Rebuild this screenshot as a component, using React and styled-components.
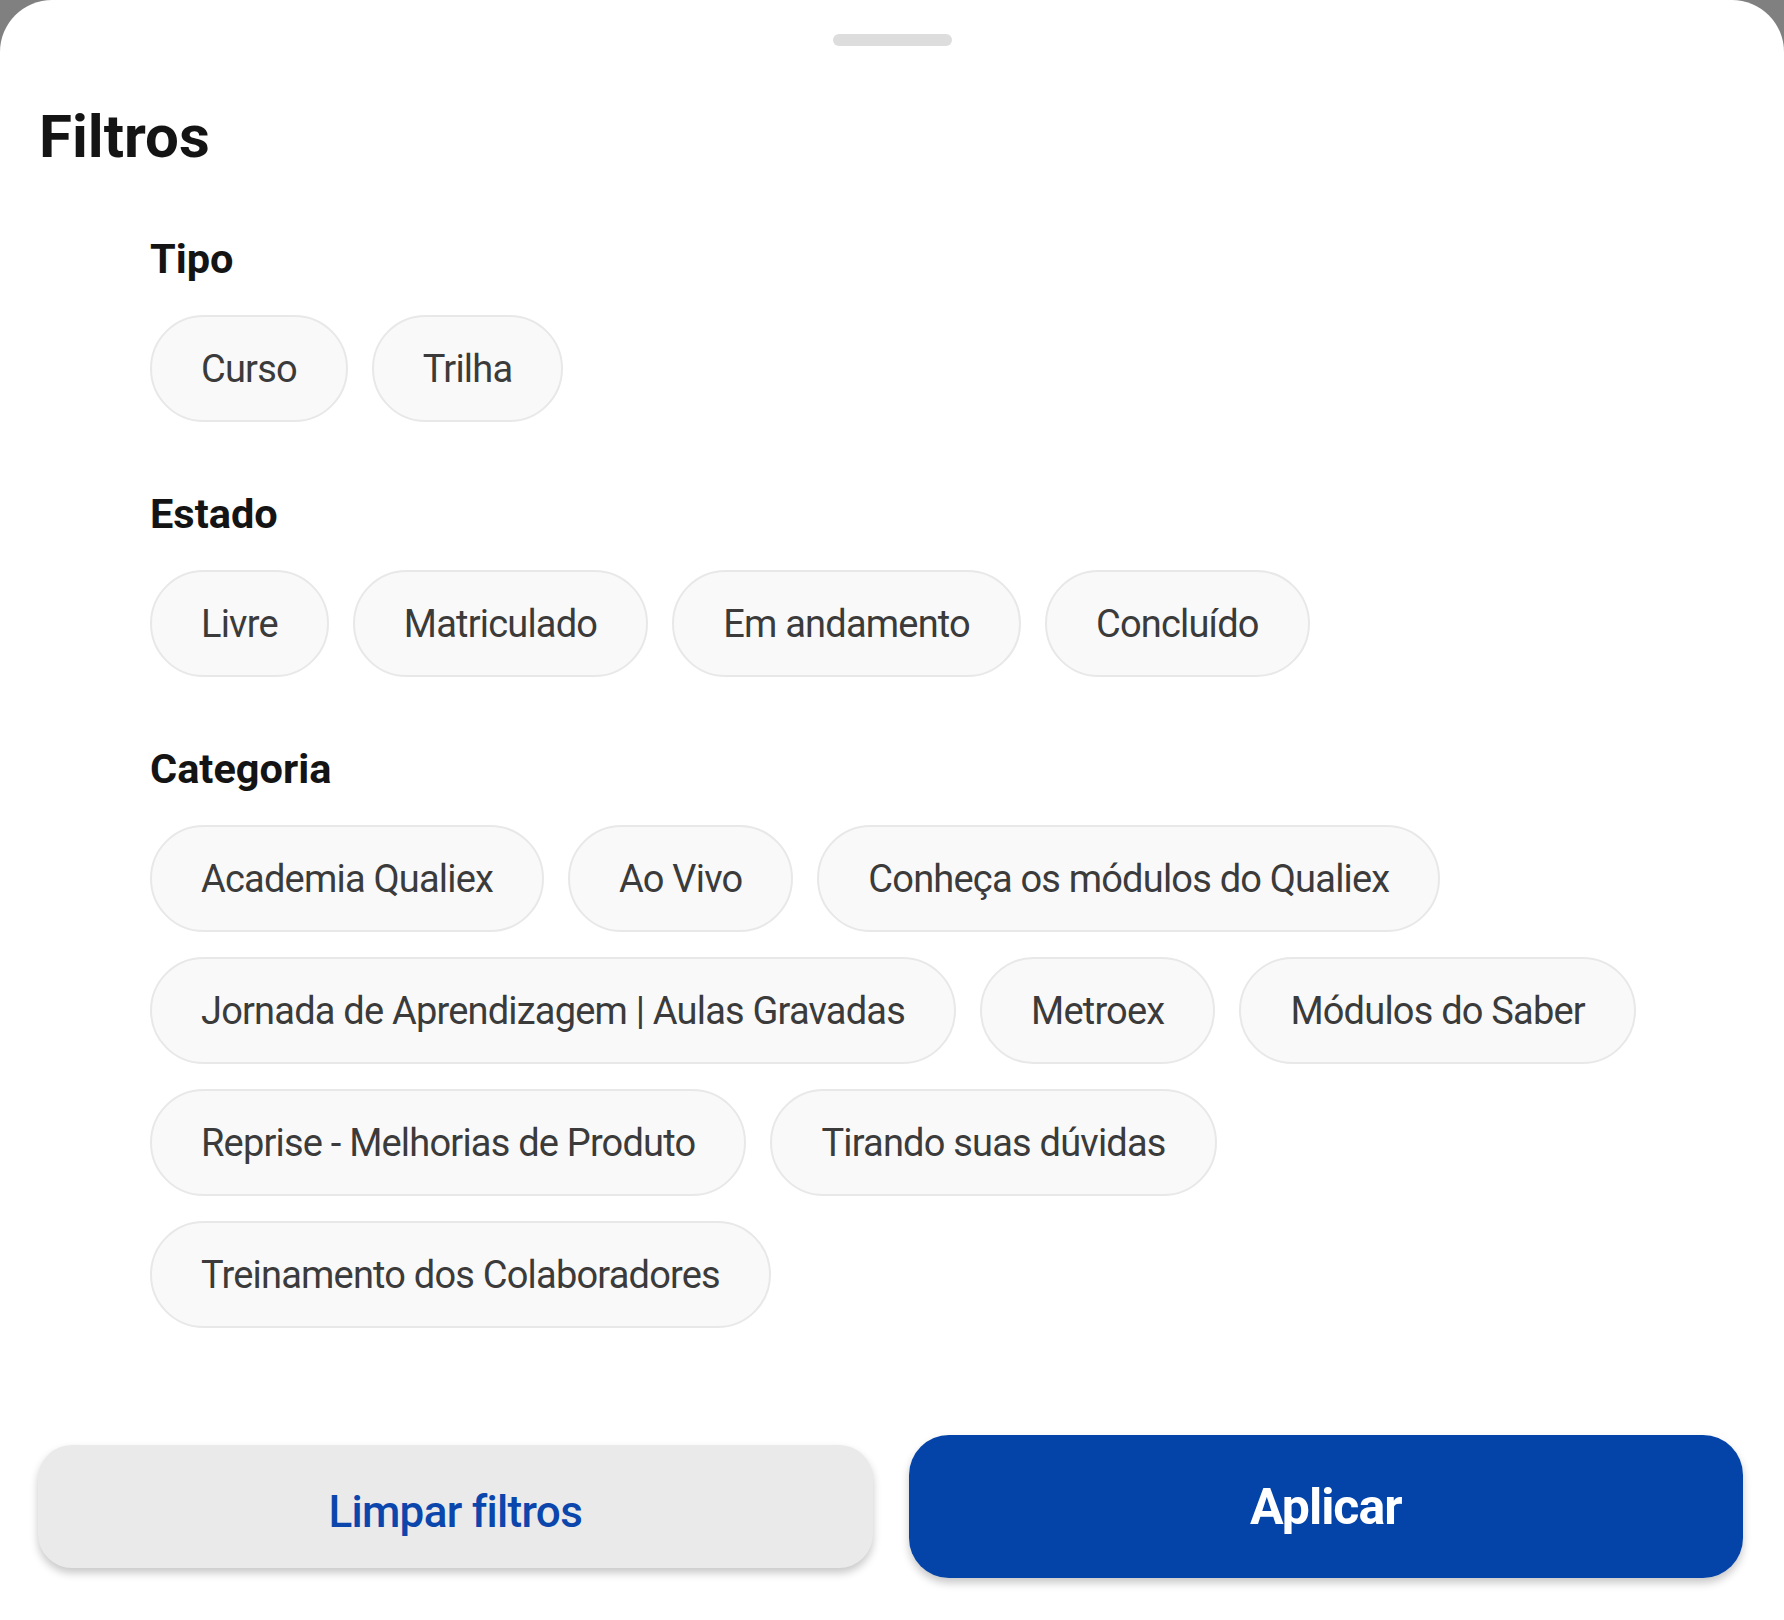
import React from 'react';
import styled, { createGlobalStyle } from 'styled-components';

const GlobalStyle = createGlobalStyle`
  html, body {
    margin: 0;
    padding: 0;
    background: #808080;
  }
  body {
    font-family: Roboto, "Noto Sans", "Liberation Sans", sans-serif;
    -webkit-font-smoothing: antialiased;
  }
  * { box-sizing: border-box; }
`;

const Sheet = styled.div`
  width: 1784px;
  height: 1620px;
  background: #ffffff;
  border-radius: 52px 52px 0 0;
  display: flex;
  flex-direction: column;
  overflow: hidden;
`;

const Handle = styled.div`
  align-self: center;
  width: 119px;
  height: 12px;
  margin-top: 34px;
  border-radius: 6px;
  background: #dddddd;
`;

const Title = styled.h1`
  margin: 61px 0 0;
  padding-left: 39px;
  font-size: 60px;
  line-height: 60px;
  font-weight: 700;
  color: #141414;
`;

const Sections = styled.div`
  display: flex;
  flex-direction: column;
  gap: 71px;
  margin-top: 71px;
  padding: 0 41px 0 150px;
`;

const Section = styled.section`
  display: flex;
  flex-direction: column;
  gap: 36px;
`;

const SectionTitle = styled.h2`
  margin: 0;
  font-size: 41.5px;
  line-height: 41px;
  font-weight: 700;
  color: #141414;
`;

const ChipList = styled.div`
  display: flex;
  flex-wrap: wrap;
  column-gap: 24px;
  row-gap: 25px;
`;

const Chip = styled.button`
  height: 107px;
  padding: 0 49px;
  border: 2px solid #e8e8e8;
  border-radius: 54px;
  background: ${p => (p.$active ? '#e3ebf8' : '#f9f9f9')};
  color: #3b3b3b;
  font-family: inherit;
  font-size: 38px;
  font-weight: 400;
  letter-spacing: -0.8px;
  white-space: nowrap;
  cursor: pointer;
`;

const Footer = styled.div`
  display: grid;
  grid-template-columns: 1fr 1fr;
  column-gap: 36px;
  align-items: center;
  margin-top: 107px;
  padding: 0 41px 0 38px;
`;

const ActionButton = styled.button`
  height: ${p => (p.$primary ? '143px' : '123px')};
  padding: ${p => (p.$primary ? '0' : '11px 0 0')};
  border: none;
  border-radius: ${p => (p.$primary ? '40px' : '34px')};
  background: ${p => (p.$primary ? '#0444a9' : '#eaeaea')};
  color: ${p => (p.$primary ? '#ffffff' : '#0b46ad')};
  font-family: inherit;
  font-size: ${p => (p.$primary ? '50px' : '44px')};
  font-weight: ${p => (p.$primary ? 700 : 500)};
  letter-spacing: ${p => (p.$primary ? '-1px' : '-0.7px')};
  box-shadow: 0 5px 8px rgba(0, 0, 0, 0.22);
  cursor: pointer;
`;

const filters = [
  { title: 'Tipo', options: ['Curso', 'Trilha'] },
  { title: 'Estado', options: ['Livre', 'Matriculado', 'Em andamento', 'Concluído'] },
  {
    title: 'Categoria',
    options: [
      'Academia Qualiex',
      'Ao Vivo',
      'Conheça os módulos do Qualiex',
      'Jornada de Aprendizagem | Aulas Gravadas',
      'Metroex',
      'Módulos do Saber',
      'Reprise - Melhorias de Produto',
      'Tirando suas dúvidas',
      'Treinamento dos Colaboradores',
    ],
  },
];

export default function App() {
  return (
    <>
      <GlobalStyle />
      <Sheet>
        <Handle />
        <Title>Filtros</Title>
        <Sections>
          {filters.map(group => (
            <Section key={group.title}>
              <SectionTitle>{group.title}</SectionTitle>
              <ChipList>
                {group.options.map(opt => (
                  <Chip key={opt} type="button">{opt}</Chip>
                ))}
              </ChipList>
            </Section>
          ))}
        </Sections>
        <Footer>
          <ActionButton type="button">Limpar filtros</ActionButton>
          <ActionButton type="button" $primary>Aplicar</ActionButton>
        </Footer>
      </Sheet>
    </>
  );
}
